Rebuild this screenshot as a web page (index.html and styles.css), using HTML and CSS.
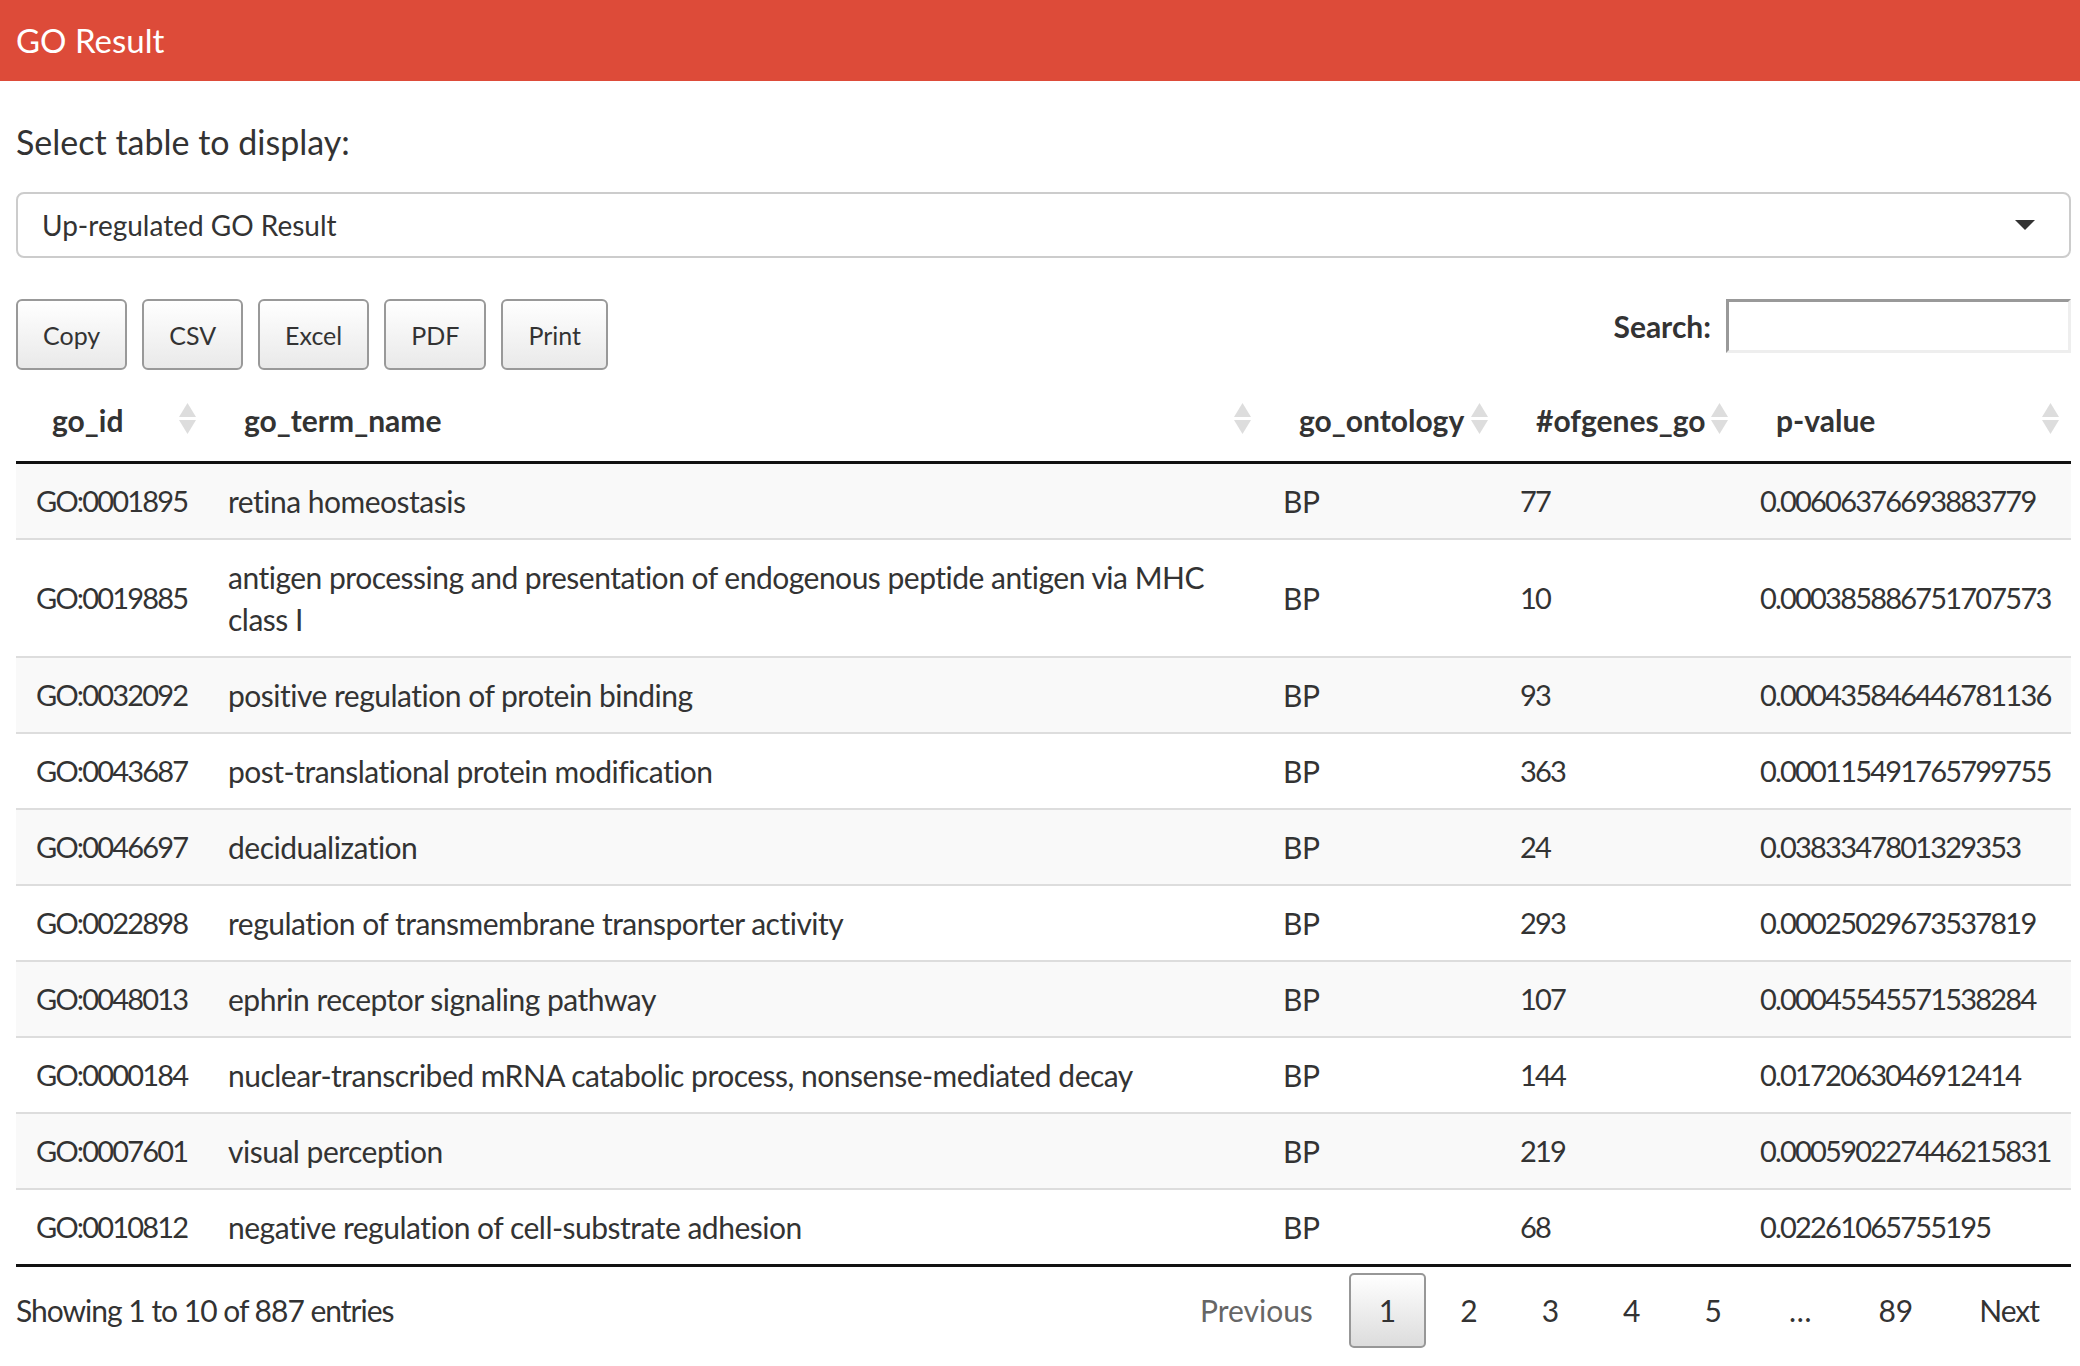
FILE: index.html
```html
<!DOCTYPE html>
<html>
<head>
<meta charset="utf-8">
<title>GO Result</title>
<link rel="stylesheet" href="styles.css">
</head>
<body>
<div class="box-header"><h3 class="box-title">GO Result</h3></div>
<div class="box-body">
  <div class="form-group">
    <label class="control-label">Select table to display:</label>
    <div class="select-box">
      <span class="select-text">Up-regulated GO Result</span>
      <span class="caret"></span>
    </div>
  </div>
  <div class="dt-wrapper">
    <div class="dt-top">
      <div class="dt-buttons">
        <button class="dt-button">Copy</button>
        <button class="dt-button">CSV</button>
        <button class="dt-button">Excel</button>
        <button class="dt-button">PDF</button>
        <button class="dt-button">Print</button>
      </div>
      <div class="dt-filter">
        <label class="filter-label">Search:</label>
        <input class="filter-input" type="search">
      </div>
    </div>
    <table class="dt-table">
      <thead>
        <tr>
          <th class="c1 sorting">go_id</th>
          <th class="c2 sorting">go_term_name</th>
          <th class="c3 sorting">go_ontology</th>
          <th class="c4 sorting">#ofgenes_go</th>
          <th class="c5 sorting">p-value</th>
        </tr>
      </thead>
      <tbody>
        <tr class="odd"><td class="num">GO:0001895</td><td>retina homeostasis</td><td>BP</td><td class="num">77</td><td class="num">0.00606376693883779</td></tr>
        <tr class="even"><td class="num">GO:0019885</td><td>antigen processing and presentation of endogenous peptide antigen via MHC class I</td><td>BP</td><td class="num">10</td><td class="num">0.000385886751707573</td></tr>
        <tr class="odd"><td class="num">GO:0032092</td><td>positive regulation of protein binding</td><td>BP</td><td class="num">93</td><td class="num">0.000435846446781136</td></tr>
        <tr class="even"><td class="num">GO:0043687</td><td>post-translational protein modification</td><td>BP</td><td class="num">363</td><td class="num">0.000115491765799755</td></tr>
        <tr class="odd"><td class="num">GO:0046697</td><td>decidualization</td><td>BP</td><td class="num">24</td><td class="num">0.0383347801329353</td></tr>
        <tr class="even"><td class="num">GO:0022898</td><td>regulation of transmembrane transporter activity</td><td>BP</td><td class="num">293</td><td class="num">0.00025029673537819</td></tr>
        <tr class="odd"><td class="num">GO:0048013</td><td>ephrin receptor signaling pathway</td><td>BP</td><td class="num">107</td><td class="num">0.00045545571538284</td></tr>
        <tr class="even"><td class="num">GO:0000184</td><td>nuclear-transcribed mRNA catabolic process, nonsense-mediated decay</td><td>BP</td><td class="num">144</td><td class="num">0.0172063046912414</td></tr>
        <tr class="odd"><td class="num">GO:0007601</td><td>visual perception</td><td>BP</td><td class="num">219</td><td class="num">0.000590227446215831</td></tr>
        <tr class="even"><td class="num">GO:0010812</td><td>negative regulation of cell-substrate adhesion</td><td>BP</td><td class="num">68</td><td class="num">0.02261065755195</td></tr>
      </tbody>
    </table>
    <div class="dt-bottom">
      <div class="dt-info">Showing 1 to 10 of 887 entries</div>
      <div class="dt-paginate">
        <a class="pg disabled">Previous</a>
        <a class="pg current">1</a>
        <a class="pg">2</a>
        <a class="pg">3</a>
        <a class="pg">4</a>
        <a class="pg">5</a>
        <span class="pg ellipsis">…</span>
        <a class="pg">89</a>
        <a class="pg">Next</a>
      </div>
    </div>
  </div>
</div>
</body>
</html>
```
FILE: styles.css
```css
html, body {
  margin: 0;
  padding: 0;
  background: #ffffff;
}
body {
  font-family: Lato, "Open Sans", sans-serif;
  color: #333333;
  font-size: 30px;
  line-height: 42px;
}
.box-header {
  background: #dd4b39;
  height: 81px;
  display: flex;
  align-items: center;
  padding-left: 16px;
}
.box-title {
  margin: 0;
  color: #ffffff;
  font-weight: 400;
  font-size: 33px;
  line-height: 1;
}
.box-body {
  padding: 0 9px 0 16px;
}
.form-group {
  padding-top: 39px;
}
.control-label {
  display: block;
  font-weight: 400;
  font-size: 34px;
  line-height: 44px;
  margin-bottom: 28px;
}
.select-box {
  box-sizing: border-box;
  height: 66px;
  border: 2px solid #cccccc;
  border-radius: 8px;
  display: flex;
  align-items: center;
  justify-content: space-between;
  padding: 0 34px 0 24px;
}
.select-text {
  font-size: 28px;
}
.caret {
  width: 0;
  height: 0;
  border-left: 10px solid transparent;
  border-right: 10px solid transparent;
  border-top: 10px solid #333333;
}
.dt-top {
  margin-top: 41px;
  display: flex;
  justify-content: space-between;
  align-items: flex-start;
}
.dt-buttons {
  display: flex;
  gap: 15px;
}
.dt-button {
  box-sizing: border-box;
  height: 71px;
  padding: 0 25px;
  border: 2px solid #999999;
  border-radius: 6px;
  background: linear-gradient(to bottom, #ffffff 0%, #e9e9e9 100%);
  font-family: Lato, "Open Sans", sans-serif;
  font-size: 25px;
  color: #333333;
}
.dt-filter {
  display: flex;
  align-items: center;
  height: 54px;
}
.filter-label {
  font-weight: 700;
  font-size: 30px;
  margin-right: 15px;
}
.filter-input {
  box-sizing: border-box;
  width: 345px;
  height: 54px;
  margin: 0;
  border-style: solid;
  border-width: 3px;
  border-color: #999999 #eeeeee #eeeeee #999999;
  background: #ffffff;
  padding: 0 6px;
}
.dt-table {
  width: 100%;
  margin-top: 9px;
  border-collapse: separate;
  border-spacing: 0;
  table-layout: fixed;
}
.dt-table th {
  box-sizing: border-box;
  position: relative;
  text-align: left;
  font-weight: 700;
  padding: 20px 36px 19px 36px;
  border-bottom: 3px solid #111111;
  white-space: nowrap;
  line-height: 43px;
}
.dt-table th.sorting::after {
  content: "";
  position: absolute;
  right: 12px;
  top: 50%;
  width: 17px;
  height: 31px;
  margin-top: -17px;
  background: url("data:image/svg+xml;utf8,<svg xmlns='http://www.w3.org/2000/svg' width='17' height='31' viewBox='0 0 17 31'><path d='M8.5 0 L17 14 L0 14 Z' fill='%23dddddd'/><path d='M0 17 L17 17 L8.5 31 Z' fill='%23dddddd'/></svg>") no-repeat center;
}
.c1 { width: 192px; }
.c2 { width: 1055px; }
.c3 { width: 237px; }
.c4 { width: 240px; }
.c5 { width: 331px; }
.dt-table td {
  padding: 16px 20px;
  border-top: 2px solid #dddddd;
  vertical-align: middle;
  letter-spacing: -0.5px;
}
.dt-table tbody tr:first-child td {
  border-top: none;
}
.dt-table tbody tr.odd {
  background: #f9f9f9;
}
.dt-table tbody tr:last-child td {
  border-bottom: 3px solid #111111;
}
.dt-table td.num {
  font-size: 29px;
  letter-spacing: -1.8px;
}
.dt-bottom {
  display: flex;
  justify-content: space-between;
  align-items: flex-start;
}
.dt-info {
  padding-top: 22px;
  letter-spacing: -1px;
}
.dt-paginate {
  display: flex;
  padding-top: 6px;
}
.pg {
  box-sizing: border-box;
  min-width: 45px;
  padding: 14px 28px;
  margin-left: 4px;
  border: 2px solid transparent;
  border-radius: 5px;
  text-align: center;
  color: #333333;
  cursor: pointer;
  line-height: 43px;
}
.pg.disabled {
  color: #666666;
  padding: 14px 30px;
}
.pg.current {
  border-color: #979797;
  background: linear-gradient(to bottom, #ffffff 0%, #dcdcdc 100%);
}
.pg.ellipsis {
  padding: 14px 31px;
}
.pg:last-child {
  padding: 14px 30px;
  letter-spacing: -1px;
}
```
